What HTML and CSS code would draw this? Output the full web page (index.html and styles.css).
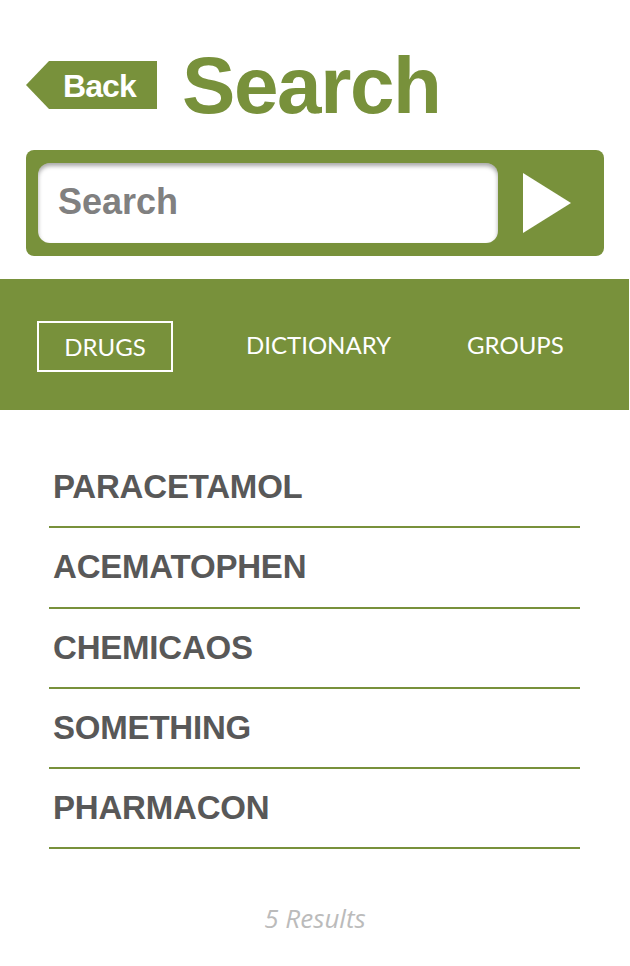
FILE: index.html
```html
<!DOCTYPE html>
<html>
<head>
<meta charset="utf-8">
<link rel="stylesheet" href="styles.css">
</head>
<body>
<div class="page">
  <header class="header">
    <a class="back"><span class="back-label">Back</span></a>
    <h1 class="title">Search</h1>
  </header>
  <div class="searchbar">
    <div class="input"><span class="placeholder">Search</span></div>
    <div class="go">
      <svg width="48" height="60" viewBox="0 0 48 60"><polygon points="0,0 48,30 0,60" fill="#fff"/></svg>
    </div>
  </div>
  <nav class="tabs">
    <div class="tab active">DRUGS</div>
    <div class="tab">DICTIONARY</div>
    <div class="tab">GROUPS</div>
  </nav>
  <ul class="results">
    <li class="row">PARACETAMOL</li>
    <li class="row">ACEMATOPHEN</li>
    <li class="row">CHEMICAOS</li>
    <li class="row">SOMETHING</li>
    <li class="row">PHARMACON</li>
  </ul>
  <div class="count">5 Results</div>
</div>
</body>
</html>
```
FILE: styles.css
```css
html, body {
  margin: 0;
  padding: 0;
  background: #fff;
}
.page {
  width: 630px;
  height: 966px;
  overflow: hidden;
  font-family: "Liberation Sans", Arial, sans-serif;
}
.header {
  display: flex;
  align-items: center;
  padding: 50px 0 0 26px;
  height: 72px;
}
.back {
  display: flex;
  align-items: center;
  width: 131px;
  height: 48px;
  background: #78913b;
  clip-path: polygon(0 50%, 23px 0, 100% 0, 100% 100%, 23px 100%);
  margin-top: -2px;
}
.back-label {
  color: #fff;
  font-weight: bold;
  font-size: 32px;
  letter-spacing: -0.9px;
  padding-left: 37px;
  margin-top: 2px;
}
.title {
  margin: 0 0 0 25px;
  font-size: 80px;
  line-height: 72px;
  font-weight: bold;
  color: #78913b;
  letter-spacing: -1.4px;
}
.searchbar {
  display: flex;
  align-items: center;
  margin: 28px 0 0 26px;
  width: 578px;
  height: 106px;
  box-sizing: border-box;
  padding: 0 12px;
  background: #78913b;
  border-radius: 8px;
}
.input {
  width: 460px;
  height: 80px;
  background: #fff;
  border-radius: 12px;
  box-shadow: inset 0 3px 4px rgba(0,0,0,0.35);
  display: flex;
  align-items: center;
  box-sizing: border-box;
  padding-left: 20px;
}
.placeholder {
  color: #808080;
  font-weight: bold;
  font-size: 36px;
  margin-top: -2px;
}
.go {
  flex: 1;
  display: flex;
  justify-content: center;
  padding-left: 4px;
}
.go svg { display: block; }
.tabs {
  margin-top: 23px;
  height: 131px;
  width: 629px;
  background: #78913b;
  display: flex;
  align-items: center;
  font-family: "Lato", "Open Sans", sans-serif;
  color: #fff;
  font-size: 24px;
}
.tab {
  box-sizing: border-box;
  text-align: center;
}
.tab.active {
  margin-left: 37px;
  width: 136px;
  height: 51px;
  border: 2px solid #fff;
  line-height: 47px;
  margin-top: 4px;
}
.tab:nth-child(2) { margin-left: 73px; }
.tab:nth-child(3) { margin-left: 76px; }
.results {
  list-style: none;
  margin: 38px 0 0 49px;
  padding: 0;
  width: 531px;
}
.row {
  height: 80.25px;
  box-sizing: border-box;
  border-bottom: 2px solid #78913b;
  padding-left: 4px;
  padding-top: 20px;
  font-weight: bold;
  font-size: 33px;
  color: #585858;
  letter-spacing: -0.2px;
}
.count {
  margin-top: 51px;
  text-align: center;
  font-family: "Open Sans", "Lato", sans-serif;
  font-style: italic;
  font-size: 26px;
  color: #bbb;
}
```
